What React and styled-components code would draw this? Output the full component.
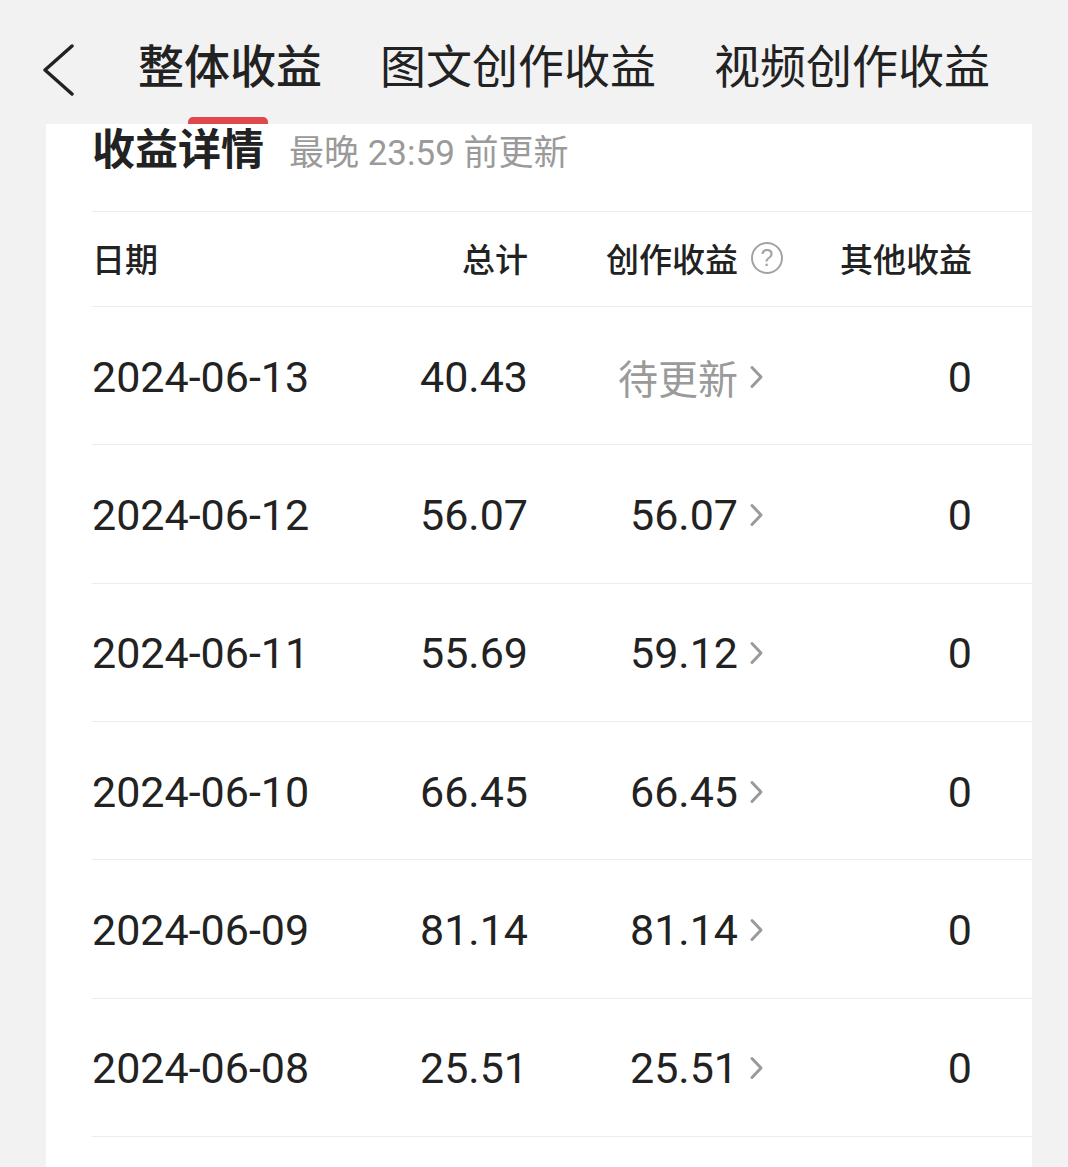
import React from "react";
import styled, { createGlobalStyle } from "styled-components";

const GlobalStyle = createGlobalStyle`
  html, body {
    margin: 0;
    padding: 0;
    background: #f2f2f2;
  }
  body {
    font-family: Roboto, "Noto Sans CJK SC", sans-serif;
    color: #222;
    overflow: hidden;
  }
`;

const Page = styled.div`
  width: 1068px;
  min-height: 1167px;
  background: #f2f2f2;
`;

const TopBar = styled.div`
  display: flex;
  align-items: center;
  height: 124px;
  padding-left: 42px;
  box-sizing: border-box;
`;

const BackButton = styled.div`
  display: flex;
  align-items: center;
  width: 34px;
  height: 52px;
  margin-right: 62px;
  padding-top: 16px;
`;

const Tab = styled.div`
  position: relative;
  display: flex;
  align-items: center;
  height: 124px;
  padding-top: 1px;
  box-sizing: border-box;
  margin-right: 58px;
  font-family: "Noto Sans CJK SC", sans-serif;
  font-size: 46px;
  font-weight: ${(p) => (p.active ? 500 : 400)};
  color: #222;
  white-space: nowrap;
`;

const Indicator = styled.span`
  position: absolute;
  left: 50%;
  bottom: -2px;
  width: 80px;
  height: 9px;
  margin-left: -42px;
  border-radius: 5px 5px 0 0;
  background: #e0484e;
`;

const Card = styled.div`
  position: relative;
  margin-left: 46px;
  width: 986px;
  min-height: 1043px;
  background: #fff;
  padding-left: 46px;
  box-sizing: border-box;
`;

const TitleRow = styled.div`
  display: flex;
  align-items: baseline;
  height: 87px;
  border-bottom: 1px solid #ececec;
  font-family: "Noto Sans CJK SC", sans-serif;
`;

const Title = styled.div`
  font-size: 43px;
  line-height: 42px;
  font-weight: 700;
  color: #222;
`;

const Subtitle = styled.div`
  margin-left: 25px;
  font-family: Roboto, "Noto Sans CJK SC", sans-serif;
  font-size: 35px;
  color: #9a9a9a;
`;

const Row = styled.div`
  display: grid;
  grid-template-columns: 260px 176px 255px 189px;
  align-items: center;
  height: ${(p) => (p.head ? 95 : 138.33)}px;
  border-bottom: 1px solid #ececec;
  font-family: ${(p) =>
    p.head ? `"Noto Sans CJK SC", sans-serif` : `Roboto, "Noto Sans CJK SC", sans-serif`};
  font-size: ${(p) => (p.head ? 33 : 43)}px;
  font-weight: ${(p) => (p.head ? 500 : 400)};
  color: #222;
  padding-top: ${(p) => (p.head ? 0 : 2)}px;
  padding-bottom: ${(p) => (p.head ? 2 : 0)}px;
  box-sizing: border-box;
`;

const Cell = styled.div`
  display: flex;
  align-items: center;
  justify-content: ${(p) => (p.left ? "flex-start" : "flex-end")};
  white-space: nowrap;
`;

const Value = styled.span`
  color: ${(p) => (p.muted ? "#9a9a9a" : "#222")};
  font-family: ${(p) =>
    p.muted ? `"Noto Sans CJK SC", sans-serif` : "inherit"};
  font-size: ${(p) => (p.muted ? "40px" : "inherit")};
`;

const Trail = styled.span`
  display: flex;
  align-items: center;
  width: 45px;
  padding-left: ${(p) => (p.icon ? 13 : 11)}px;
  box-sizing: border-box;
`;

const HelpIcon = styled.span`
  display: flex;
  align-items: center;
  justify-content: center;
  width: 28px;
  height: 28px;
  border: 2px solid #a3a3a3;
  border-radius: 50%;
  font-family: "Liberation Sans", sans-serif;
  font-size: 23px;
  font-weight: 400;
  color: #a3a3a3;
  line-height: 1;
`;

const Chevron = () => (
  <svg width="15" height="24" viewBox="0 0 15 24">
    <path d="M3 2.5 L12 12 L3 21.5" fill="none" stroke="#9a9a9a" strokeWidth="3" strokeLinecap="round" strokeLinejoin="round" />
  </svg>
);

const rows = [
  { date: "2024-06-13", total: "40.43", create: "待更新", other: "0" },
  { date: "2024-06-12", total: "56.07", create: "56.07", other: "0" },
  { date: "2024-06-11", total: "55.69", create: "59.12", other: "0" },
  { date: "2024-06-10", total: "66.45", create: "66.45", other: "0" },
  { date: "2024-06-09", total: "81.14", create: "81.14", other: "0" },
  { date: "2024-06-08", total: "25.51", create: "25.51", other: "0" },
];

export default function App() {
  return (
    <Page>
      <GlobalStyle />
      <TopBar>
        <BackButton>
          <svg width="32" height="52" viewBox="0 0 32 52">
            <path d="M30 2 L3 26 L30 50" fill="none" stroke="#222" strokeWidth="3.4" strokeLinecap="round" strokeLinejoin="round" />
          </svg>
        </BackButton>
        <Tab active>
          整体收益
          <Indicator />
        </Tab>
        <Tab>图文创作收益</Tab>
        <Tab>视频创作收益</Tab>
      </TopBar>
      <Card>
        <TitleRow>
          <Title>收益详情</Title>
          <Subtitle>最晚 23:59 前更新</Subtitle>
        </TitleRow>
        <Row head>
          <Cell left>日期</Cell>
          <Cell>总计</Cell>
          <Cell>
            创作收益
            <Trail icon>
              <HelpIcon>?</HelpIcon>
            </Trail>
          </Cell>
          <Cell>其他收益</Cell>
        </Row>
        {rows.map((r) => (
          <Row key={r.date}>
            <Cell left>{r.date}</Cell>
            <Cell>{r.total}</Cell>
            <Cell>
              <Value muted={r.create === "待更新"}>{r.create}</Value>
              <Trail>
                <Chevron />
              </Trail>
            </Cell>
            <Cell>{r.other}</Cell>
          </Row>
        ))}
      </Card>
    </Page>
  );
}
